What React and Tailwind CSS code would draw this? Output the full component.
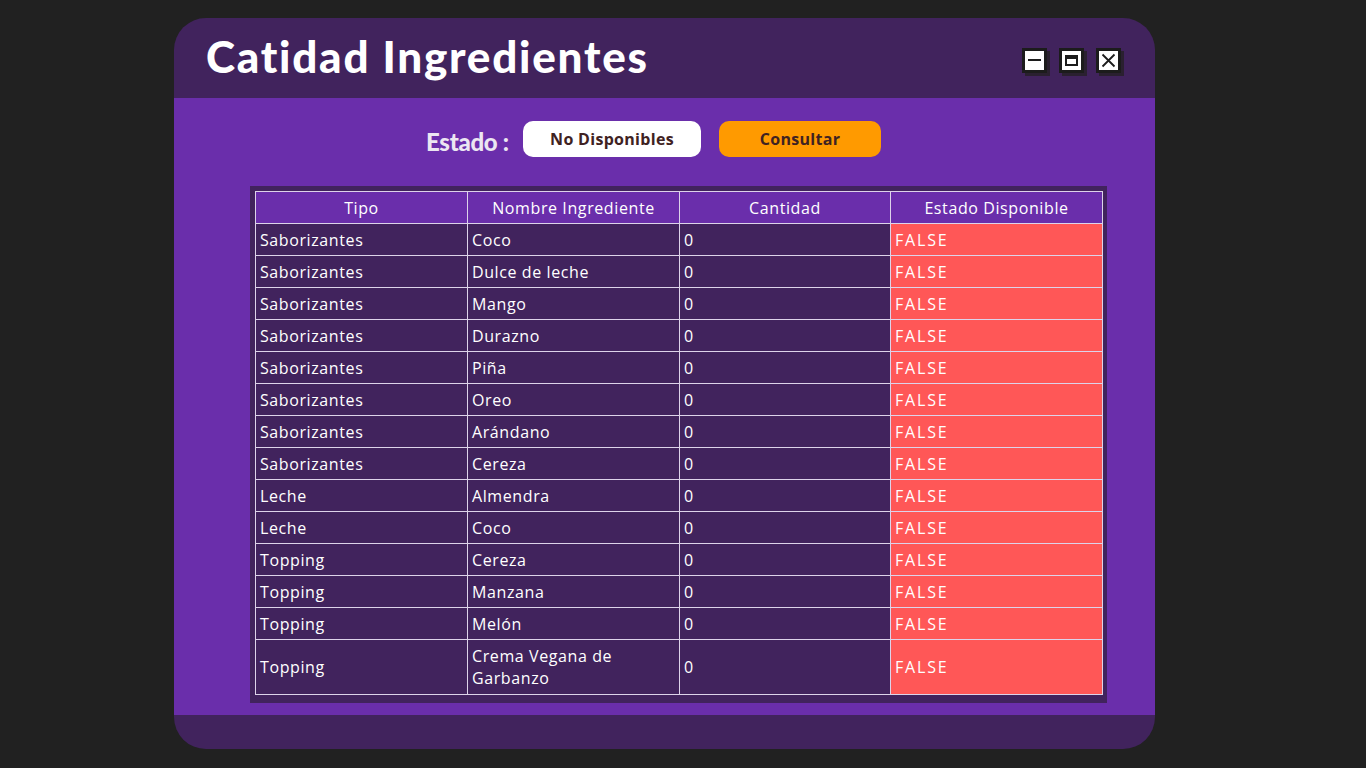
import React from "react";

const rows = [
  ["Saborizantes", "Coco"],
  ["Saborizantes", "Dulce de leche"],
  ["Saborizantes", "Mango"],
  ["Saborizantes", "Durazno"],
  ["Saborizantes", "Piña"],
  ["Saborizantes", "Oreo"],
  ["Saborizantes", "Arándano"],
  ["Saborizantes", "Cereza"],
  ["Leche", "Almendra"],
  ["Leche", "Coco"],
  ["Topping", "Cereza"],
  ["Topping", "Manzana"],
  ["Topping", "Melón"],
  ["Topping", "Crema Vegana de Garbanzo"],
];

function WinBtn({ children }) {
  return (
    <div className="w-[25px] h-[25px] bg-white border-[3px] border-[#1c1c1c] shadow-[3px_3px_0_#2a2030] flex items-center justify-center">
      {children}
    </div>
  );
}

export default function App() {
  return (
    <div className="w-[1366px] h-[768px] bg-[#212121] pt-[18px] pl-[174px] font-['Open_Sans',sans-serif]">
      <div className="w-[981px] h-[731px] rounded-[32px] overflow-hidden bg-[#41235d] flex flex-col">
        <div className="h-[80px] flex items-center justify-between pl-[32px] pr-[34px] shrink-0">
          <h1 className="text-white text-[44px] font-black tracking-[1.75px] leading-none mt-[-4px] font-['Lato',sans-serif]">
            Catidad Ingredientes
          </h1>
          <div className="flex gap-[12px] mt-[4px]">
            <WinBtn>
              <div className="w-[13px] h-[2px] bg-[#1c1c1c]" />
            </WinBtn>
            <WinBtn>
              <div className="w-[13px] h-[11px] border-2 border-t-[4px] border-[#1c1c1c]" />
            </WinBtn>
            <WinBtn>
              <svg width="15" height="15" viewBox="0 0 15 15">
                <path d="M1.5 1.5 L13.5 13.5 M13.5 1.5 L1.5 13.5" stroke="#1c1c1c" strokeWidth="1.8" />
              </svg>
            </WinBtn>
          </div>
        </div>
        <div className="h-[617px] bg-[#6a2eab] flex flex-col items-start shrink-0">
          <div className="flex items-center h-[36px] mt-[23px] ml-[252px]">
            <span className="text-[#ece6f2] text-[24px] font-black tracking-[-0.3px] w-[97px] mt-[6px] font-['Lato',sans-serif]">
              Estado :
            </span>
            <button className="w-[178px] h-[36px] bg-white rounded-[10px] text-[#3f2222] text-[16px] font-bold tracking-[0.3px]">
              No Disponibles
            </button>
            <button className="w-[162px] h-[36px] bg-[#ff9a00] rounded-[10px] text-[#3f2222] text-[16px] font-bold tracking-[0.3px] ml-[18px]">
              Consultar
            </button>
          </div>
          <div className="mt-[29px] ml-[76px] w-[857px] bg-[#41235d] p-[5px] pb-[8px]">
            <table className="w-[847px] border-collapse table-fixed text-[16px] tracking-[0.6px] text-white">
              <colgroup>
                <col className="w-[212px]" />
                <col className="w-[212px]" />
                <col className="w-[211px]" />
                <col className="w-[212px]" />
              </colgroup>
              <thead>
                <tr className="h-[32px] bg-[#6a2eab]">
                  {["Tipo", "Nombre Ingrediente", "Cantidad", "Estado Disponible"].map((h) => (
                    <th key={h} className="border border-[#ddd3ea] font-normal text-center">
                      {h}
                    </th>
                  ))}
                </tr>
              </thead>
              <tbody>
                {rows.map(([t, n], i) => (
                  <tr key={i} className={i === rows.length - 1 ? "h-[55px]" : "h-[32px]"}>
                    <td className="border border-[#ddd3ea] bg-[#41235d] px-[4px] leading-[22px]">{t}</td>
                    <td className="border border-[#ddd3ea] bg-[#41235d] px-[4px] leading-[22px]">
                      {i === rows.length - 1 ? (
                        <>
                          Crema Vegana de
                          <br />
                          Garbanzo
                        </>
                      ) : (
                        n
                      )}
                    </td>
                    <td className="border border-[#ddd3ea] bg-[#41235d] px-[4px] leading-[22px]">0</td>
                    <td className="border border-[#ddd3ea] bg-[#ff5757] px-[4px] leading-[22px] tracking-[1.8px]">FALSE</td>
                  </tr>
                ))}
              </tbody>
            </table>
          </div>
        </div>
      </div>
    </div>
  );
}
